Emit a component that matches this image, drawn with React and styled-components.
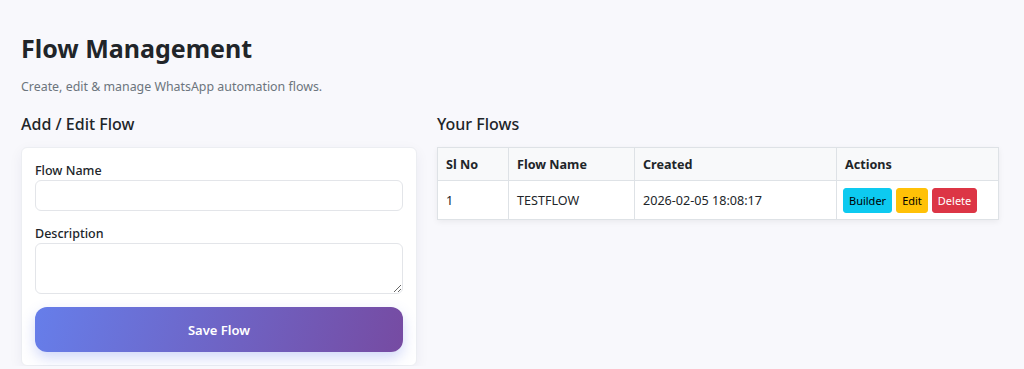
import React from 'react'
import styled, { createGlobalStyle } from 'styled-components'

const GlobalStyle = createGlobalStyle`
  * { box-sizing: border-box; }
  body {
    margin: 0;
    background: #f8f8fc;
    font-family: "Noto Sans", "Open Sans", sans-serif;
    color: #212529;
  }
`

const Page = styled.div`
  padding: 29px 21px 0 21px;
`

const Title = styled.h1`
  margin: 0;
  font-size: 25px;
  font-weight: 700;
  line-height: 38px;
  color: #212529;
`

const Subtitle = styled.p`
  margin: 10px 0 0 0;
  font-size: 12.4px;
  color: #6c757d;
  line-height: 20px;
`

const Columns = styled.div`
  display: grid;
  grid-template-columns: 396px 562px;
  column-gap: 20px;
  margin-top: 15px;
`

const SectionTitle = styled.h5`
  margin: 0 0 11px 0;
  font-size: 16px;
  font-weight: 500;
  line-height: 24px;
  color: #212529;
`

const Card = styled.div`
  background: #fff;
  border-radius: 6px;
  border: 1px solid #eceef2;
  box-shadow: 0 4px 14px rgba(30, 40, 90, 0.06);
  padding: 14px 13px 13px 13px;
`

const Field = styled.div`
  margin-bottom: 14px;
`

const Label = styled.label`
  display: block;
  font-size: 12.5px;
  font-weight: 500;
  line-height: 18px;
  margin-bottom: 0;
  color: #212529;
`

const Input = styled.input`
  display: block;
  width: 100%;
  height: 31px;
  border: 1px solid #e3e5e9;
  border-radius: 6px;
  background: #fff;
  font: inherit;
  padding: 4px 10px;
  outline: none;
`

const TextArea = styled.textarea`
  display: block;
  width: 100%;
  height: 51px;
  border: 1px solid #e3e5e9;
  border-radius: 6px;
  background: #fff;
  font: inherit;
  padding: 4px 10px;
  outline: none;
`

const SaveButton = styled.button`
  display: block;
  width: 100%;
  height: 45px;
  margin-top: -1px;
  border: none;
  border-radius: 12px;
  background: linear-gradient(105deg, #667eea 0%, #764ba2 100%);
  color: #fff;
  font-family: inherit;
  font-size: 13px;
  font-weight: 600;
  box-shadow: 0 6px 14px rgba(102, 126, 234, 0.3);
`

const Table = styled.table`
  width: 100%;
  border-collapse: collapse;
  background: #fff;
  box-shadow: 0 2px 6px rgba(0, 0, 0, 0.06);
  font-size: 12.6px;
`

const Th = styled.th`
  text-align: left;
  font-weight: 700;
  background: #f8f9fa;
  border: 1px solid #dee2e6;
  height: 33px;
  padding: 0 8px;
  width: ${p => p.w || 'auto'};
`

const Td = styled.td`
  border: 1px solid #dee2e6;
  height: 39px;
  padding: 0 ${p => p.pad || '8px'};
  color: #212529;
`

const Actions = styled.div`
  display: flex;
  gap: 4px;
  padding-top: 1px;
`

const ActionButton = styled.button`
  height: 25px;
  border: 1px solid ${p => p.bg};
  background: ${p => p.bg};
  color: ${p => p.fg};
  border-radius: 3px;
  padding: 0 5px;
  font-family: inherit;
  font-size: 11px;
`

export default function App () {
  return (
    <>
      <GlobalStyle />
      <Page>
        <Title>Flow Management</Title>
        <Subtitle>Create, edit &amp; manage WhatsApp automation flows.</Subtitle>
        <Columns>
          <div>
            <SectionTitle>Add / Edit Flow</SectionTitle>
            <Card>
              <Field>
                <Label>Flow Name</Label>
                <Input type='text' />
              </Field>
              <Field>
                <Label>Description</Label>
                <TextArea />
              </Field>
              <SaveButton>Save Flow</SaveButton>
            </Card>
          </div>
          <div>
            <SectionTitle>Your Flows</SectionTitle>
            <Table>
              <thead>
                <tr>
                  <Th w='71px'>Sl No</Th>
                  <Th w='126px'>Flow Name</Th>
                  <Th w='202px'>Created</Th>
                  <Th>Actions</Th>
                </tr>
              </thead>
              <tbody>
                <tr>
                  <Td>1</Td>
                  <Td>TESTFLOW</Td>
                  <Td>2026-02-05 18:08:17</Td>
                  <Td pad='6px'>
                    <Actions>
                      <ActionButton bg='#0dcaf0' fg='#000'>Builder</ActionButton>
                      <ActionButton bg='#ffc107' fg='#000'>Edit</ActionButton>
                      <ActionButton bg='#dc3545' fg='#fff'>Delete</ActionButton>
                    </Actions>
                  </Td>
                </tr>
              </tbody>
            </Table>
          </div>
        </Columns>
      </Page>
    </>
  )
}
